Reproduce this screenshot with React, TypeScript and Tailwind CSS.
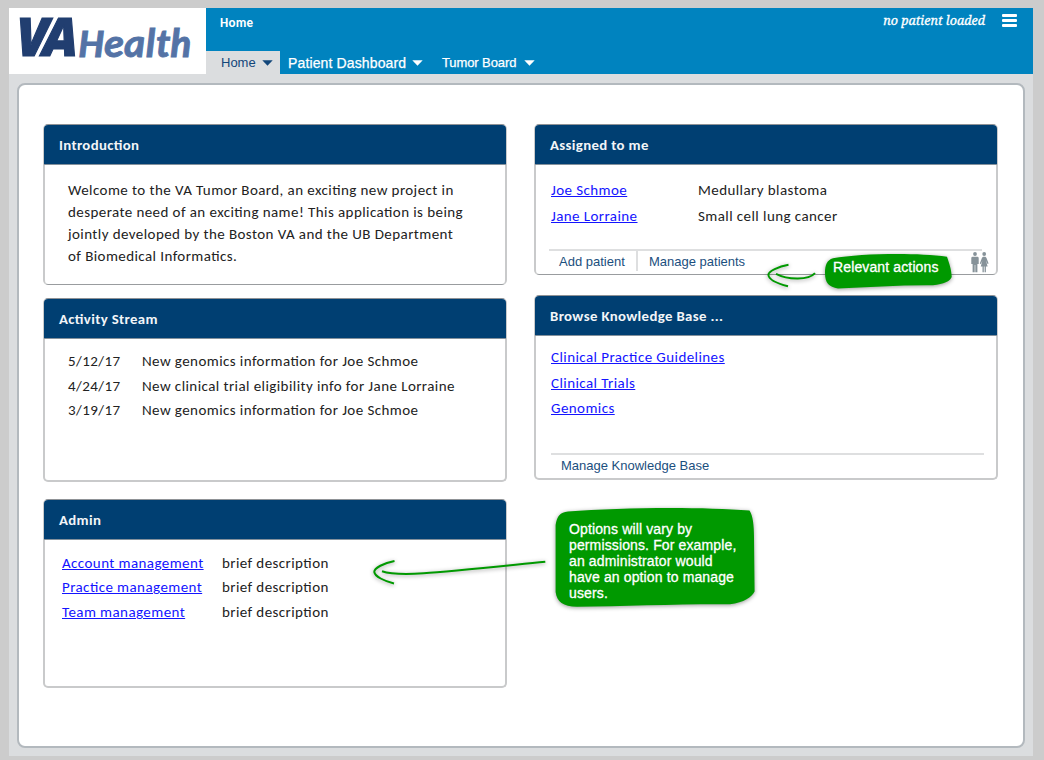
import React from "react";
import type { ReactNode } from "react";

function Caret({ className }: { className: string }) {
  return (
    <svg width="11" height="6" viewBox="0 0 11 6" className={className}>
      <path d="M0.3 0.3 H10.7 L5.5 5.8 Z" fill="currentColor" />
    </svg>
  );
}

function Logo() {
  return (
    <div className="h-[66px] w-[197px] shrink-0 bg-white">
      <svg width="197" height="66" viewBox="0 0 197 66" role="img" aria-label="VA Health" className="overflow-visible">
        <g fontStyle="italic">
          <text x="7.5" y="47.5" fontFamily="'Open Sans', sans-serif" fontWeight="800" fontSize="52.5" letterSpacing="-6.4" fill="#213e70" stroke="#213e70" strokeWidth="1.2">VA</text>
          <text x="69.5" y="48.8" fontFamily="'Carlito', 'Lato', sans-serif" fontSize="40.5" fontWeight="700" fill="#5473a6" stroke="#5473a6" strokeWidth="0.9" textLength="113" lengthAdjust="spacingAndGlyphs">Health</text>
        </g>
      </svg>
    </div>
  );
}

function Card({ title, className, children }: { title: string; className: string; children: ReactNode }) {
  return (
    <section className={"flex flex-col rounded-[5px] border-2 border-t border-[#c9cacb] border-t-[#8f9296] bg-white " + className}>
      <h2 className="-mx-px flex h-[40px] shrink-0 items-center rounded-t-[4px] border-b border-[#84919c] bg-[#003f72] pl-[15px] pt-px text-[14.8px] font-bold leading-[18px] tracking-[0.35px] text-[#f2f5f8]">
        {title}
      </h2>
      {children}
    </section>
  );
}

function Link({ children }: { children: string }) {
  return (
    <a href="#" className="text-[#1414ff] underline decoration-1 underline-offset-1">
      {children}
    </a>
  );
}

const activity = [
  ["5/12/17", "New genomics information for Joe Schmoe"],
  ["4/24/17", "New clinical trial eligibility info for Jane Lorraine"],
  ["3/19/17", "New genomics information for Joe Schmoe"],
];

const patients = [
  ["Joe Schmoe", "Medullary blastoma"],
  ["Jane Lorraine", "Small cell lung cancer"],
];

function PeopleIcon() {
  return (
    <svg width="18" height="21" viewBox="0 0 18 21" fill="#869299">
      <circle cx="4" cy="2" r="1.9" />
      <path d="M1.6 4.8 H6.4 Q7.7 4.8 7.7 6.2 V12 H6.4 V20.3 H4.3 V13 H3.7 V20.3 H1.6 V12 H0.3 V6.2 Q0.3 4.8 1.6 4.8 Z" />
      <circle cx="13.2" cy="2" r="1.9" />
      <path d="M12 4.8 H14.4 L15.4 5.8 L17.6 11.6 L16.5 12.1 L15 8.6 L16.6 14.5 H14.9 V20.3 H13.6 V14.5 H12.8 V20.3 H11.5 V14.5 H9.8 L11.4 8.6 L9.9 12.1 L8.8 11.6 L11 5.8 Z" />
    </svg>
  );
}

export default function App() {
  return (
    <div className="h-[760px] w-[1044px] overflow-hidden bg-[#cccccc] pl-[9px] pt-2 font-['Carlito','Lato',sans-serif] text-[15px] tracking-[0.42px] text-[#222] [font-feature-settings:'liga'_1]">
      <div className="relative flex h-[747.5px] w-[1024px] flex-col bg-[#dbdddf]">
        <header className="flex h-[66px] bg-[#0083bf]">
          <Logo />
          <div className="flex grow flex-col justify-between">
            <div className="flex items-start justify-between pl-[14px] pr-[16px]">
              <span className="pt-[6px] text-[13px] font-bold leading-[18px] tracking-[0.25px] text-white">Home</span>
              <div className="flex items-start">
                <span className="mr-[17px] pt-[4px] font-['Noto_Serif',serif] text-[12.6px] italic leading-[18px] tracking-normal text-white [-webkit-text-stroke:0.3px_white]">no patient loaded</span>
                <div className="mt-[6px] flex flex-col gap-[2px]">
                  <div className="h-[3px] w-[15px] rounded-[1px] bg-white" />
                  <div className="h-[3px] w-[15px] rounded-[1px] bg-white" />
                  <div className="h-[3px] w-[15px] rounded-[1px] bg-white" />
                </div>
              </div>
            </div>
            <nav className="flex h-[23px] items-center font-['Liberation_Sans',sans-serif] text-[13px] tracking-normal text-white">
              <div className="flex h-full w-[74px] items-center bg-[#dbdddf] pl-[15px] text-[#12467a]">
                <span>Home</span>
                <Caret className="ml-[6px]" />
              </div>
              <div className="flex w-[154px] items-center pl-2">
                <span className="text-[14px] leading-5 tracking-[0.13px] [-webkit-text-stroke:0.25px_white]">Patient Dashboard</span>
                <Caret className="ml-[6px]" />
              </div>
              <div className="flex items-center pl-[8px]">
                <span className="tracking-[-0.1px] [-webkit-text-stroke:0.25px_white]">Tumor Board</span>
                <Caret className="ml-[8px]" />
              </div>
            </nav>
          </div>
        </header>

        <main className="ml-2 mt-[9px] flex h-[665px] w-[1008px] gap-[27px] rounded-[8px] border-2 border-[#b3b9be] bg-white pl-[24px] pt-[39px]">
          <div className="flex w-[464px] flex-col">
            <Card title="Introduction" className="h-[161px] border-b border-b-[#999c9f]">
              <p className="whitespace-nowrap pl-[23px] pt-[14px] leading-[22px]">
                Welcome to the VA Tumor Board, an exciting new project in
                <br />
                desperate need of an exciting name! This application is being
                <br />
                jointly developed by the Boston VA and the UB Department
                <br />
                of Biomedical Informatics.
              </p>
            </Card>
            <Card title="Activity Stream" className="mt-[13px] h-[184px]">
              <div className="grid grid-cols-[74px_1fr] pl-[23px] pt-[10px] leading-[24.5px]">
                {activity.map(([date, text]) => (
                  <React.Fragment key={date}>
                    <span>{date}</span>
                    <span>{text}</span>
                  </React.Fragment>
                ))}
              </div>
            </Card>
            <Card title="Admin" className="mt-[17px] h-[189px]">
              <div className="grid grid-cols-[160px_1fr] pl-[17px] pt-[11px] leading-[24.4px]">
                {["Account management", "Practice management", "Team management"].map((name) => (
                  <React.Fragment key={name}>
                    <Link>{name}</Link>
                    <span>brief description</span>
                  </React.Fragment>
                ))}
              </div>
            </Card>
          </div>

          <div className="flex w-[464px] flex-col">
            <Card title="Assigned to me" className="h-[151px] border-b border-b-[#999c9f]">
              <div className="grid grid-cols-[147px_1fr] pl-[15px] pt-[12px] leading-[26px]">
                {patients.map(([name, condition]) => (
                  <React.Fragment key={name}>
                    <Link>{name}</Link>
                    <span>{condition}</span>
                  </React.Fragment>
                ))}
              </div>
              <div className="ml-[13px] mt-[20px] h-[25px] w-[439px] font-['Liberation_Sans',sans-serif] text-[13px] tracking-normal text-[#1b4f7e]">
                <div className="h-[2px] w-[433px] bg-[#dedfe0]" />
                <div className="flex items-start">
                  <span className="w-[89px] border-r-2 border-[#dedfe0] pl-[10px] pt-[2px] leading-[18px]">Add patient</span>
                  <span className="ml-[11px] mt-[2px] grow leading-[18px]">Manage patients</span>
                  <span className="-mr-px mt-px">
                    <PeopleIcon />
                  </span>
                </div>
              </div>
            </Card>
            <Card title="Browse Knowledge Base ..." className="mt-[20px] h-[185px]">
              <div className="flex flex-col items-start pl-[15px] pt-[9px] leading-[25.5px]">
                <Link>Clinical Practice Guidelines</Link>
                <Link>Clinical Trials</Link>
                <Link>Genomics</Link>
              </div>
              <div className="ml-[15px] mt-[31px] w-[433px] border-t-2 border-[#dedfe0] pl-[10px] pt-px font-['Liberation_Sans',sans-serif] text-[13px] leading-[20px] tracking-normal text-[#1b4f7e]">
                Manage Knowledge Base
              </div>
            </Card>
          </div>
        </main>

        <div className="absolute left-[755px] top-[240px] h-[50px] w-[195px]">
          <svg width="195" height="50" viewBox="764 248 195 50" className="overflow-visible drop-shadow-[0_1px_2px_rgba(0,0,0,0.4)]">
            <path d="M825 273 C825 265 827 260 833 258.3 C860 253.5 915 252.5 947 256.7 C949 263 951.5 269 951.7 277 C950 281.5 944 284 933 285.3 C900 285 868 287.5 838 288.4 C829 287 825 283 825 273 Z" fill="#009900" />
            <path d="M788.5 264.8 C779 266.5 768 271 768.4 275 C769 280 779 284 788 286.3 M776 273.8 C787 279.5 808 281 815 273.2" fill="none" stroke="#009900" strokeWidth="2" />
          </svg>
          <span className="absolute left-[69px] top-[11px] whitespace-nowrap font-['Liberation_Sans',sans-serif] text-[14px] leading-4 tracking-[0.13px] text-white [-webkit-text-stroke:0.3px_white]">
            Relevant actions
          </span>
        </div>

        <div className="absolute left-[361px] top-[497px] h-[105px] w-[390px]">
          <svg width="390" height="105" viewBox="370 505 390 105" className="overflow-visible drop-shadow-[0_1px_2px_rgba(0,0,0,0.4)]">
            <path d="M555.6 525 C557 516 560 512.4 568 511.4 C620 507.5 700 506.5 749.5 510.6 C753 516 754 526 754 537 L754.6 591.5 C752 597 744 602.5 730 604.2 C680 603.8 625 606.2 577 606.8 C563 606.5 557 602 555.6 592 Z" fill="#009900" />
            <path d="M394.5 561 C384 563 374 568 374.3 572 C375 576.5 384 581 394 583.5 M382 571.3 C400 577.5 440 572.5 545.3 561.8" fill="none" stroke="#009900" strokeWidth="2" />
          </svg>
          <p className="absolute left-[199px] top-[16px] whitespace-nowrap font-['Liberation_Sans',sans-serif] text-[14px] leading-4 tracking-[0.13px] text-white [-webkit-text-stroke:0.3px_white]">
            Options will vary by
            <br />
            permissions. For example,
            <br />
            an administrator would
            <br />
            have an option to manage
            <br />
            users.
          </p>
        </div>
      </div>
    </div>
  );
}
